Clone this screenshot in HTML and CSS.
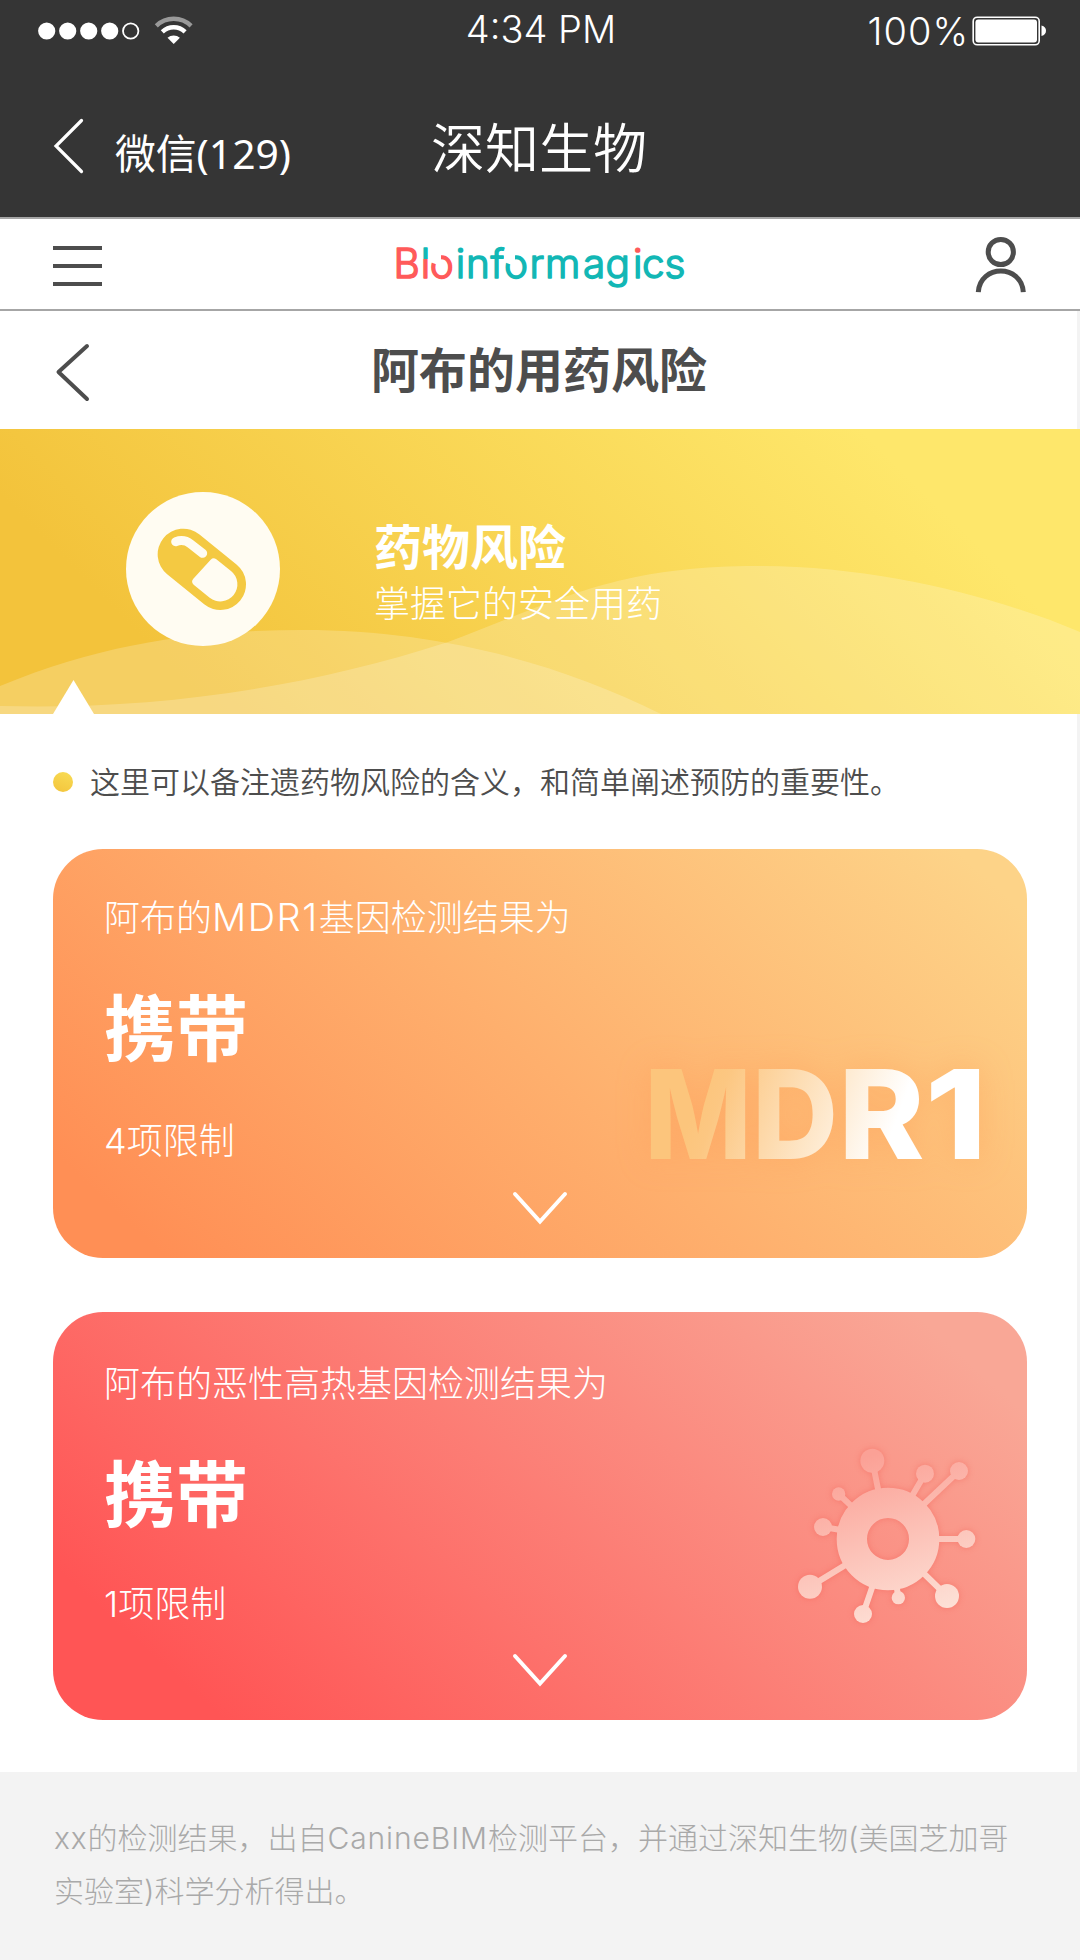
FILE: index.html
```html
<!DOCTYPE html>
<html lang="zh-CN">
<head>
<meta charset="utf-8">
<title>阿布的用药风险</title>
<link rel="stylesheet" href="styles.css">
</head>
<body>
<header class="wechat">
  <div class="status">
    <svg class="signal" width="160" height="40" viewBox="0 0 160 40">
      <g fill="#fff"><circle cx="8.7" cy="20" r="8.6"/><circle cx="29.7" cy="20" r="8.6"/><circle cx="50.7" cy="20" r="8.6"/><circle cx="71.7" cy="20" r="8.6"/></g>
      <circle cx="92.7" cy="20" r="7.7" fill="none" stroke="#fff" stroke-width="1.8"/>
      <g fill="none" stroke="#fff" stroke-width="4.4">
        <path d="M118.300 14.800A25 25 0 0 1 153.100 14.800" stroke="#999"/>
        <path d="M124.300 20.800A16.500 16.500 0 0 1 147.100 20.800"/>
      </g>
      <path d="M129.500 26.700A9.500 9.500 0 0 1 141.900 26.700L135.700 33z" fill="#fff"/>
    </svg>
    <span class="time">4:34 PM</span>
    <div class="power"><span class="percent">100%</span>
      <svg width="76" height="30" viewBox="0 0 76 30">
        <rect x="1.200" y="1.200" width="66" height="27.600" rx="4" fill="none" stroke="#fff" stroke-width="1.600"/>
        <rect x="3.400" y="3.400" width="61.600" height="23.200" rx="3" fill="#fff"/>
        <path d="M69.500 9.500c6 1 6 9.500 0 10.500z" fill="#fff"/>
      </svg>
    </div>
  </div>
  <div class="chat-nav">
    <div class="chat-back">
      <svg width="32" height="58" viewBox="0 0 32 58"><path d="M28.500 3.500L3 29L28.500 54.500" fill="none" stroke="#fff" stroke-width="3.200" stroke-linecap="round"/></svg>
      <span>微信(129)</span>
    </div>
    <h1 class="chat-title">深知生物</h1>
  </div>
</header>

<nav class="site-bar">
  <div class="burger"><i></i><i></i><i></i></div>
  <svg class="logo" width="300" height="60" viewBox="390 235 300 60">
    <defs>
      <linearGradient id="stem" gradientUnits="userSpaceOnUse" x1="0" y1="247" x2="0" y2="278"><stop offset=".38" stop-color="#12b7b5"/><stop offset=".38" stop-color="#ff5a5a"/></linearGradient>
      <linearGradient id="tip" gradientUnits="userSpaceOnUse" x1="0" y1="247" x2="0" y2="278"><stop offset=".22" stop-color="#ff5a5a"/><stop offset=".22" stop-color="#12b7b5"/></linearGradient>
    </defs>
    <text class="logo-text" y="278" x="394.500 421.800 430.800 456.800 467 491.500 505 530.500 546 584 606.500 634 643 665.500"><tspan class="red">B</tspan><tspan fill="url(#stem)" stroke="url(#stem)">l</tspan><tspan class="red">o</tspan>informag<tspan fill="url(#tip)" stroke="url(#tip)">i</tspan>cs</text>
    <path d="M442 266V252H431V262zM516 266V252H505V262z" fill="#fff"/>
  </svg>
  <svg class="user" width="52" height="58" viewBox="975 236 52 58"><g fill="none" stroke="#4d4d4d" stroke-width="5"><circle cx="1000.800" cy="252" r="12.600"/><path d="M978.300 292.200C980 264 1021.600 264 1023.300 292.200"/></g></svg>
</nav>

<main class="page">
  <div class="page-head">
    <svg width="36" height="60" viewBox="0 0 36 60"><path d="M32 4L3.500 30L32 57" fill="none" stroke="#4d4d4d" stroke-width="4" stroke-linecap="round" stroke-linejoin="round"/></svg>
    <h2>阿布的用药风险</h2>
  </div>

  <section class="banner">
    <svg class="waves" width="1080" height="285" viewBox="0 429 1080 285">
      <path d="M0 686C110 640 210 630 303 630C440 630 560 664 661 714H0z" fill="#fff" fill-opacity=".2"/>
      <path d="M0 706C150 710 300 690 448 642C560 600 615 566 758 566C880 566 1000 598 1080 632V714H0z" fill="#fff" fill-opacity=".2"/>
    </svg>
    <svg class="pill" width="154" height="154" viewBox="78 66 462 462">
      <circle cx="309" cy="297" r="231" fill="#fffcf2"/>
      <path d="M250 253L361 343" stroke="#f4c942" stroke-width="154" stroke-linecap="round"/>
      <path d="M227 215Q252 206 272 222L308 250" fill="none" stroke="#fffcf2" stroke-width="27" stroke-linecap="round" stroke-linejoin="round"/>
      <path d="M349 268L393 303A51 51 0 0 1 329 383L281 344Q272 335 280 326L332 269Q340 261 349 268z" fill="#fffcf2"/>
    </svg>
    <div class="banner-text"><h3>药物风险</h3><p>掌握它的安全用药</p></div>
    <i class="notch"></i>
  </section>

  <p class="note"><i></i>这里可以备注遗药物风险的含义，和简单阐述预防的重要性。</p>

  <section class="card card-mdr">
    <p class="card-label">阿布的<span class="gene">MDR1</span>基因检测结果为</p>
    <strong>携带</strong>
    <p class="card-count">4项限制</p>
    <svg class="emblem mdr" width="360" height="130" viewBox="640 1050 360 130">
      <defs><linearGradient id="fade" gradientUnits="userSpaceOnUse" x1="702" y1="1085" x2="905" y2="1160"><stop stop-color="#fcc57c"/><stop offset=".1" stop-color="#fcc782"/><stop offset=".9" stop-color="#fff"/></linearGradient></defs>
      <text class="mdr-text" y="1159"><tspan x="644.500" textLength="107" lengthAdjust="spacingAndGlyphs">M</tspan><tspan x="752" textLength="86" lengthAdjust="spacingAndGlyphs">D</tspan><tspan x="838.500" textLength="86" lengthAdjust="spacingAndGlyphs">R</tspan><tspan x="925" textLength="62" lengthAdjust="spacingAndGlyphs">1</tspan></text>
    </svg>
    <svg class="chevron" width="56" height="34" viewBox="0 0 56 34"><path d="M3 3L28 30.500L53 3" fill="none" stroke="#fff" stroke-width="4" stroke-linecap="round"/></svg>
  </section>

  <section class="card card-heat">
    <p class="card-label">阿布的恶性高热基因检测结果为</p>
    <strong>携带</strong>
    <p class="card-count">1项限制</p>
    <svg class="emblem virus" width="260" height="230" viewBox="0 0 780 690">
      <defs><linearGradient id="skin" gradientUnits="userSpaceOnUse" x1="290" y1="120" x2="450" y2="600"><stop stop-color="#fba196"/><stop offset="1" stop-color="#fde0d6"/></linearGradient></defs>
      <g fill="none" stroke="url(#skin)" stroke-width="18">
        <circle cx="384" cy="357" r="108.500" stroke-width="91"/>
        <path d="M337 122L355 212M236 222L272 256M190 321L238 329M150 500L258 434M309 582L337 500M415 533L410 500M561 528L490 459M619 357.100L530 357M597 153L492 252M495 161L456 228"/>
      </g>
      <g fill="url(#skin)"><circle cx="337" cy="122" r="36"/><circle cx="236" cy="222" r="20"/><circle cx="189" cy="321" r="27"/><circle cx="150" cy="500" r="36"/><circle cx="309" cy="582" r="27"/><circle cx="415" cy="533" r="20"/><circle cx="561" cy="528" r="36"/><circle cx="619" cy="357" r="27"/><circle cx="597" cy="153" r="27"/><circle cx="495" cy="161" r="27"/></g>
    </svg>
    <svg class="chevron" width="56" height="34" viewBox="0 0 56 34"><path d="M3 3L28 30.500L53 3" fill="none" stroke="#fff" stroke-width="4" stroke-linecap="round"/></svg>
  </section>
</main>

<footer class="source">
  <p><span class="sample">xx</span><span>的检测结果，出自</span><span class="platform">CanineBIM</span><span>检测平台，并通过深知生物(美国芝加哥</span></p>
  <p>实验室)科学分析得出。</p>
</footer>
</body>
</html>
```
FILE: styles.css
```css
* { box-sizing: border-box; margin: 0; padding: 0; }
body {
  width: 1080px;
  height: 1960px;
  overflow: hidden;
  background: #f3f3f3;
  color: #4d4d4d;
  font-family: Inter, "Noto Sans CJK SC", sans-serif;
  font-weight: 300;
}
svg { display: block; flex: none; }

/* WeChat chrome */
.wechat { height: 219px; background: #353535; border-bottom: 2px solid #a6a6a6; color: #fff; }
.status {
  height: 62px;
  padding: 0 32px 0 38px;
  display: grid;
  grid-template-columns: 1fr auto 1fr;
  align-items: center;
}
.time { font-size: 38px; line-height: 58px; height: 62px; margin-left: -4px; }
.power { display: flex; justify-content: flex-end; align-items: center; gap: 3px; }
.percent { font-size: 38px; line-height: 60px; letter-spacing: 1px; }
.chat-nav { height: 155px; display: grid; grid-template-columns: 431px auto 1fr; align-items: start; }
.chat-back {
  display: flex;
  padding: 55px 0 0 53px;
  gap: 30px;
  font-family: "Noto Sans", "Noto Sans CJK SC", sans-serif;
  font-size: 40.800px;
  line-height: 73px;
  font-weight: 400;
}
.chat-title { font-size: 54px; line-height: 80px; font-weight: 350; padding-top: 48px; }

/* Site bar */
.site-bar {
  height: 92px;
  padding: 0 53px;
  display: flex;
  justify-content: space-between;
  align-items: center;
  background: #fff;
  border-bottom: 2px solid #a6a6a6;
}
.burger { display: grid; gap: 14px; width: 49px; margin-top: 4px; }
.burger i { height: 4px; background: #4d4d4d; }
.logo { margin-top: 2px; }
.user { margin-top: 1px; }
.logo-text { font: 350 40.500px Inter, sans-serif; fill: #12b7b5; stroke: #12b7b5; stroke-width: 1.5px; stroke-linejoin: round; }
.logo-text .red { fill: #ff5a5a; stroke: #ff5a5a; }

.page { width: 1077px; height: 1461px; background: #fff; }
.page-head { height: 118px; padding: 3px 0 0 55px; display: flex; align-items: center; gap: 280px; }
.page-head h2 { font-size: 48px; line-height: 70px; font-weight: 700; margin-top: -2px; }

/* Banner */
.banner {
  position: relative;
  width: 1080px;
  height: 285px;
  display: flex;
  padding: 63px 0 0 126px;
  background: linear-gradient(45deg, #f3c33b 16%, #fee76b 84%);
  color: #fff;
}
.waves { position: absolute; left: 0; top: 0; }
.pill { position: relative; }
.banner-text { position: relative; margin-left: 94px; padding-top: 21px; }
.banner-text h3 { font-size: 48px; line-height: 70px; font-weight: 700; }
.banner-text p { font-size: 36px; line-height: 42px; }
.notch {
  position: absolute;
  left: 53px;
  bottom: 0;
  width: 41px;
  height: 34px;
  background: #fff;
  clip-path: polygon(50% 0, 100% 100%, 0 100%);
}

.note {
  height: 135px;
  padding: 0 0 4px 53px;
  display: flex;
  align-items: center;
  gap: 17px;
  font-size: 30px;
  font-weight: 350;
}
.note i { width: 20px; height: 20px; margin-top: 4px; border-radius: 50%; background: linear-gradient(200deg, #f8dc55, #f3c43c); }

/* Result cards */
.card {
  position: relative;
  width: 974px;
  height: 409px;
  margin-left: 53px;
  padding: 42px 51px 0;
  border-radius: 50px;
  color: #fff;
}
.card-mdr { background: linear-gradient(43deg, #ff8f55 8%, #fdd388 95%); }
.card-heat { height: 408px; margin-top: 54px; padding-top: 45px; background: linear-gradient(42deg, #ff5555 12%, #f9a796 92%); }
.card-label, .card-count { font-size: 36px; line-height: 54px; }
.gene { font-size: 38px; letter-spacing: 1.500px; line-height: 1; }
.card strong { display: block; margin-top: 31px; font-size: 72px; line-height: 106px; font-weight: 700; }
.card-count { margin-top: 32px; }
.card-heat .card-count { margin-top: 29px; }
.emblem, .chevron { position: absolute; }
.chevron { left: 458.500px; bottom: 33px; }
.mdr { left: 587px; top: 201px; overflow: visible; filter: drop-shadow(0 0 16px rgba(255, 150, 80, .35)); }
.mdr-text { font: 800 124px Inter, sans-serif; fill: url(#fade); }
.virus { left: 707px; top: 108px; filter: drop-shadow(0 0 3px rgba(245, 90, 80, .45)); }

.source { padding: 40px 50px 0 54px; color: #a9a9a9; font-size: 30px; line-height: 52.500px; white-space: nowrap; }
.sample { letter-spacing: .8px; }
.platform { letter-spacing: .9px; }
```
